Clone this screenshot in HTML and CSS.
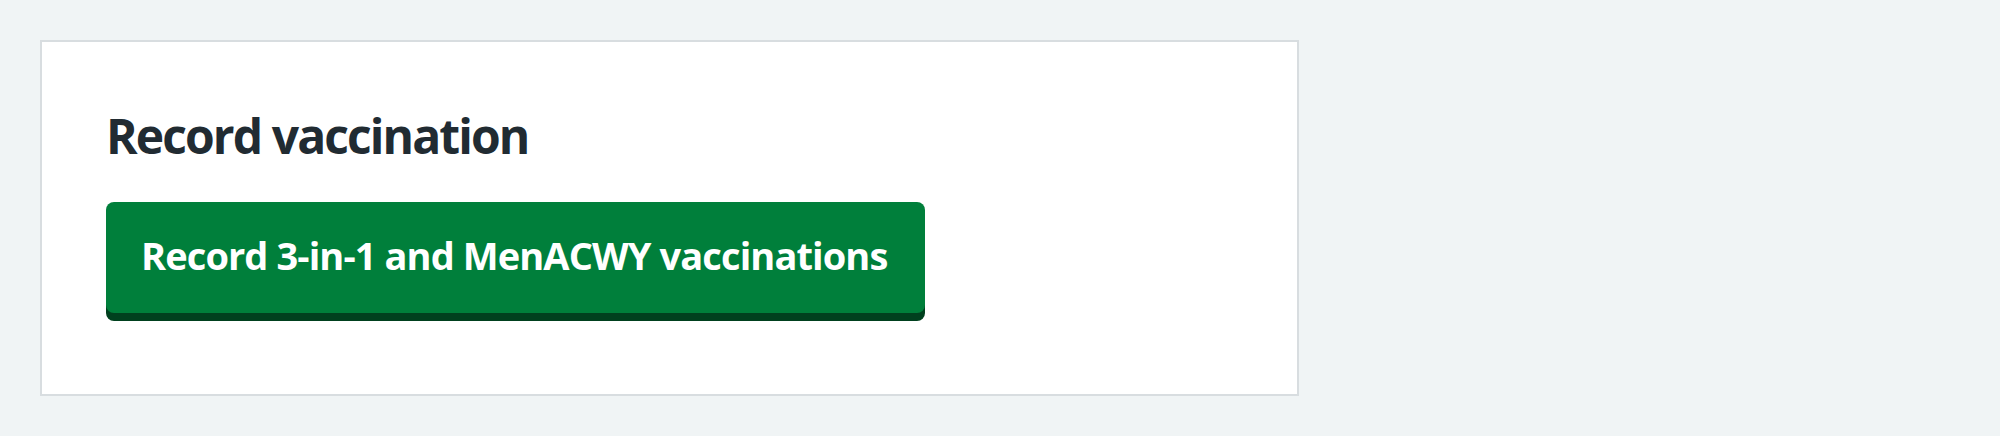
FILE: index.html
```html
<!DOCTYPE html>
<html lang="en">
<head>
<meta charset="utf-8">
<title>Record vaccination</title>
<link rel="stylesheet" href="styles.css">
</head>
<body>
<main class="page">
  <section class="card">
    <h2 class="card-heading">Record vaccination</h2>
    <button class="button" type="button">Record 3-in-1 and MenACWY vaccinations</button>
  </section>
</main>
</body>
</html>
```

FILE: styles.css
```css
* { box-sizing: border-box; }

html, body {
  margin: 0;
  padding: 0;
  background: #f0f4f5;
}

body {
  font-family: "Open Sans", "Noto Sans", sans-serif;
  color: #212b32;
}

.page {
  padding: 40px;
}

.card {
  width: 1259px;
  background: #ffffff;
  border: 2px solid #d8dde0;
  padding: 62px 64px 81px;
}

.card-heading {
  margin: 0 0 34px;
  font-size: 48px;
  line-height: 64px;
  font-weight: 700;
  letter-spacing: -1.9px;
  color: #212b32;
}

.button {
  display: inline-block;
  margin: 0;
  border: 0;
  border-radius: 8px;
  background: #007f3b;
  box-shadow: 0 8px 0 #00401e;
  color: #ffffff;
  font-family: "Open Sans", "Noto Sans", sans-serif;
  font-size: 38px;
  font-weight: 700;
  line-height: 63px;
  letter-spacing: -0.9px;
  padding: 22px 38px 26px 35px;
  cursor: pointer;
}
```
